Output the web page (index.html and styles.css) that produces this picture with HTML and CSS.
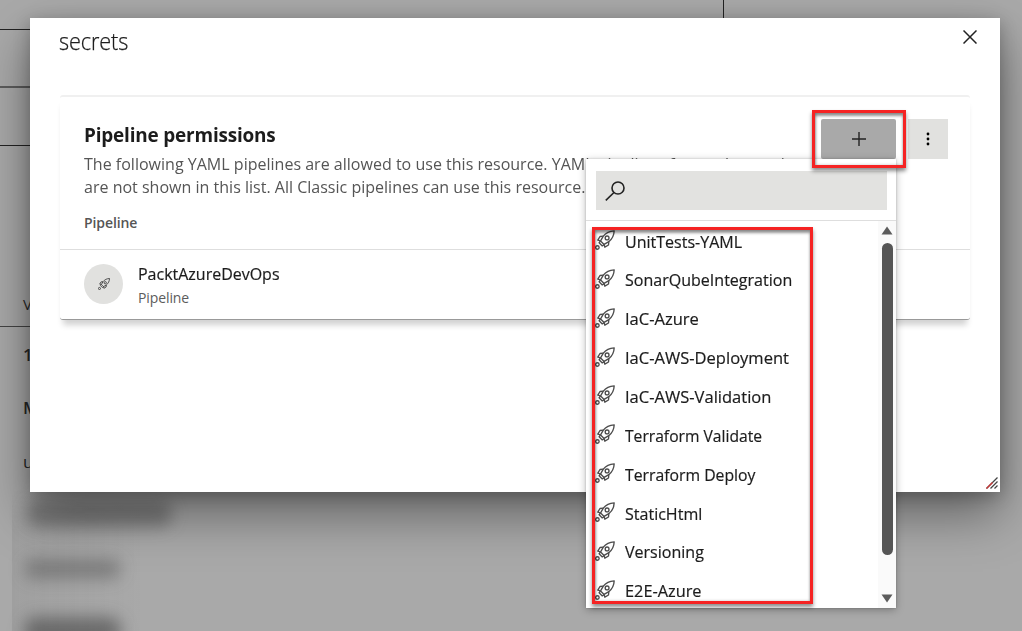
FILE: index.html
```html
<!DOCTYPE html>
<html lang="en">
<head>
<meta charset="utf-8">
<title>secrets</title>
<link rel="stylesheet" href="styles.css">
</head>
<body>
<svg class="defs" width="0" height="0" aria-hidden="true">
  <symbol id="rocket" viewBox="0 0 20 20">
    <g fill="none" stroke="currentColor" stroke-width="1.35" stroke-linejoin="round">
      <path d="M19.200.8C14.800 1 11 2.700 8.300 6.200L5.600 10.900l3.500 3.500 4.700-2.700C17.300 9 19 5.200 19.200.8z"/>
      <circle cx="12.100" cy="7.900" r="1.900"/>
      <path d="M8.300 6.200L5 6.500 2.800 10.200l2.800.7M13.800 11.700l-.3 3.300-3.700 2.200-.7-2.800M5.600 10.900l-1.500 1.800 3.200 3.200 1.800-1.500"/>
      <circle cx="2.400" cy="17.500" r="1.750"/>
    </g>
  </symbol>
</svg>

<div class="page">
  <div class="rule rule-a"></div>
  <div class="rule rule-b"></div>
  <div class="rule rule-c"></div>
  <div class="rule rule-d"></div>
  <div class="rule-v"></div>
  <div class="edge"></div>
  <div class="smudge smudge-a"></div>
  <div class="smudge smudge-b"></div>
  <div class="smudge smudge-c"></div>
</div>

<section class="dialog">
  <header class="dialog-head">
    <h1>secrets</h1>
    <svg class="close" viewBox="0 0 14 14"><path d="M.5.5l13 13M13.500.5l-13 13" fill="none" stroke="#222" stroke-width="1.500"/></svg>
  </header>
  <div class="card">
    <div class="card-top">
      <h2>Pipeline permissions</h2>
      <div class="actions">
        <div class="btn btn-add"><svg viewBox="0 0 14 14" width="14" height="14"><path d="M7 0v14M0 7h14" stroke="#222" stroke-width="1.400"/></svg></div>
        <div class="btn btn-more"><svg viewBox="0 0 4 14" width="4" height="14"><circle cx="2" cy="2" r="1.400"/><circle cx="2" cy="7" r="1.400"/><circle cx="2" cy="12" r="1.400"/></svg></div>
      </div>
    </div>
    <p class="desc"><span class="l1">The following YAML pipelines are allowed to use this resource. YAML pipelines from other projects</span><br><span class="l2">are not shown in this list. All Classic pipelines can use this resource.</span></p>
    <div class="col-head">Pipeline</div>
    <div class="row">
      <div class="avatar"><svg width="12" height="12"><use href="#rocket"/></svg></div>
      <div class="who"><div class="name">PacktAzureDevOps</div><div class="kind">Pipeline</div></div>
    </div>
  </div>
  <svg class="grip" viewBox="0 0 12 12"><path d="M.5 11.500l11-11M4.500 11.500l7-7M8.500 11.500l3-3" fill="none" stroke="#444" stroke-width="1.300"/><path d="M.5 11.500l6-6" stroke="#c33" stroke-width="1.300"/></svg>
</section>

<div class="behind">
  <span class="cut cut-a">V</span><span class="cut cut-b">1</span><span class="cut cut-c">M</span><span class="cut cut-d">u</span>
</div>

<div class="menu">
  <div class="search-wrap"><div class="search"><svg width="20" height="20" viewBox="0 0 20 20"><path d="M9 11.500L.8 19.300" stroke="#222" stroke-width="1.600"/><circle cx="13" cy="7" r="6" fill="none" stroke="#222" stroke-width="1.600"/></svg></div></div>
  <div class="menu-body">
    <ul class="list">
      <li><svg><use href="#rocket"/></svg><span class="w1">UnitTests-YAML</span></li>
      <li><svg><use href="#rocket"/></svg><span class="w2">SonarQubeIntegration</span></li>
      <li><svg><use href="#rocket"/></svg><span class="w3">IaC-Azure</span></li>
      <li><svg><use href="#rocket"/></svg><span class="w4">IaC-AWS-Deployment</span></li>
      <li><svg><use href="#rocket"/></svg><span class="w5">IaC-AWS-Validation</span></li>
      <li><svg><use href="#rocket"/></svg><span class="w6">Terraform Validate</span></li>
      <li><svg><use href="#rocket"/></svg><span class="w7">Terraform Deploy</span></li>
      <li><svg><use href="#rocket"/></svg><span class="w8">StaticHtml</span></li>
      <li><svg><use href="#rocket"/></svg><span class="w9">Versioning</span></li>
      <li><svg><use href="#rocket"/></svg><span class="w10">E2E-Azure</span></li>
    </ul>
    <div class="scroll">
      <svg width="12" height="9" viewBox="0 0 12 9"><path d="M6 0.500L11.500 8.500H.5z" fill="#5c5c5c"/></svg>
      <div class="thumb"></div>
      <svg class="down" width="12" height="9" viewBox="0 0 12 9"><path d="M6 8.500L11.500.5H.5z" fill="#5c5c5c"/></svg>
    </div>
  </div>
</div>

<div class="mark mark-add"></div>
<div class="mark mark-list"></div>
</body>
</html>
```

FILE: styles.css
```css
* { box-sizing: border-box; }
html, body { margin: 0; width: 1022px; height: 631px; overflow: hidden; }
body { position: relative; background: #a9a9a9; color: #1c1c1c; font-family: "Open Sans", "Noto Sans", sans-serif; }
h1, h2, p, ul { margin: 0; padding: 0; }
.defs { position: absolute; }

.page { position: absolute; inset: 0; }
.rule { position: absolute; left: 0; width: 32px; height: 1px; background: #222; }
.rule-a { top: 29px; }
.rule-b { top: 86px; height: 2px; background: #5c5c5c; }
.rule-c { top: 145px; }
.rule-d { top: 326px; background: #444; }
.rule-v { position: absolute; left: 723px; top: 0; width: 1px; height: 18px; background: #222; }
.edge { position: absolute; left: 12px; top: 490px; width: 130px; height: 141px; background: linear-gradient(90deg, rgba(80,80,80,.1), rgba(80,80,80,0)); -webkit-mask-image: linear-gradient(transparent, #000 40px); mask-image: linear-gradient(transparent, #000 40px); }
.smudge { position: absolute; border-radius: 12px; filter: blur(8px); }
.smudge-a { left: 26px; top: 501px; width: 146px; height: 26px; background: rgba(60,60,60,.4); }
.smudge-b { left: 24px; top: 559px; width: 97px; height: 20px; background: rgba(60,60,60,.38); }
.smudge-c { left: 24px; top: 617px; width: 97px; height: 28px; background: rgba(50,50,50,.5); }
.behind { position: absolute; left: 0; top: 0; width: 30px; height: 500px; overflow: hidden; font-size: 17px; line-height: 20px; }
.cut { position: absolute; left: 23px; }
.cut-a { top: 294px; font-size: 15px; }
.cut-b { top: 345px; font-weight: 600; }
.cut-c { top: 398px; font-weight: 600; }
.cut-d { top: 452px; }

.dialog { position: absolute; left: 30px; top: 18px; width: 970px; height: 474px; background: #fff; box-shadow: 0 22px 48px rgba(0,0,0,.42), 0 4px 16px rgba(0,0,0,.24); }
.dialog-head { display: flex; justify-content: space-between; height: 77px; padding: 8px 23px 0 29px; }
h1 { font-size: 23px; line-height: 30px; font-weight: 350; letter-spacing: -.1px; white-space: nowrap; transform: scaleX(.94); transform-origin: 0 50%; -webkit-text-stroke: .25px #1c1c1c; }
.close { width: 14px; height: 14px; margin-top: 4px; }
.grip { position: absolute; right: 2px; bottom: 3px; width: 12px; height: 12px; }

.card { margin: 0 30px; height: 225px; border-top: 2px solid #f0f0f0; border-bottom: 1px solid #999; border-radius: 3px; box-shadow: 0 8px 6px -3px rgba(0,0,0,.18); }
.card-top { display: flex; justify-content: space-between; height: 55px; padding: 22px 22px 0 24px; }
h2 { font-size: 20px; line-height: 32px; font-weight: 700; letter-spacing: -.2px; white-space: nowrap; transform: scaleX(.947); transform-origin: 0 50%; }
.actions { display: flex; gap: 12px; }
.btn { display: flex; align-items: center; justify-content: center; height: 40px; }
.btn-add { width: 75px; background: #a9a9a9; border-radius: 2px; }
.btn-more { width: 40px; background: #e1e1df; }
.desc { padding-left: 24px; font-size: 17px; line-height: 23px; color: #555; white-space: nowrap; }
.desc span, .list span { display: inline-block; transform: scaleX(.943); transform-origin: 0 50%; }
.col-head { padding: 14px 0 0 24px; height: 52px; border-bottom: 1px solid #dedede; font-size: 14px; line-height: 22px; font-weight: 600; letter-spacing: -.1px; color: #555; }
.row { display: flex; gap: 15px; padding: 14px 24px; }
.avatar { display: flex; align-items: center; justify-content: center; width: 39px; height: 40px; border-radius: 50%; background: #e1e1df; color: #333; }
.name { font-size: 17px; line-height: 24px; margin-top: -2px; transform: scaleX(.94); transform-origin: 0 50%; white-space: nowrap; -webkit-text-stroke: .2px #1c1c1c; }
.kind { font-size: 14px; line-height: 24px; color: #5c5c5c; letter-spacing: -.1px; }

.menu { position: absolute; left: 586px; top: 159px; width: 310px; height: 449px; background: #fff; box-shadow: 0 2px 8px rgba(0,0,0,.28), 0 0 2px rgba(0,0,0,.2); }
.search-wrap { height: 62px; padding: 12px 9px 0 10px; border-bottom: 1px solid #dedede; }
.search { display: flex; align-items: center; height: 39px; padding-left: 9px; background: #e2e2e0; }
.menu-body { display: flex; height: 387px; }
.list { flex: 1; list-style: none; overflow: hidden; }
.list li { display: flex; align-items: center; gap: 10px; height: 38.850px; padding: 2.400px 0 0 9px; font-size: 17px; line-height: 24px; white-space: nowrap; -webkit-text-stroke: .2px #1c1c1c; }
.list svg { width: 20px; height: 20px; color: #4c4c4c; margin-top: -3px; }
.list .w3, .list .w4, .list .w5 { transform: scaleX(.972); }
.list .w6 { transform: scaleX(.92); }
.list .w7 { transform: scaleX(.928); }
.list .w10 { transform: scaleX(.96); }
.scroll { display: flex; flex-direction: column; align-items: center; width: 18px; padding-top: 5px; background: #fafafa; }
.thumb { width: 11px; height: 312px; margin-top: 8px; border-radius: 6px; background: #555; }
.down { margin-top: 39px; }

.mark { position: absolute; border: 3px solid #f52323; box-shadow: 0 3px 4px rgba(0,0,0,.45), inset 0 3px 3px rgba(0,0,0,.4), inset 1px 0 3px rgba(0,0,0,.25); }
.mark-add { left: 812px; top: 110px; width: 94px; height: 58px; }
.mark-list { left: 592px; top: 227px; width: 221px; height: 377px; }
```
